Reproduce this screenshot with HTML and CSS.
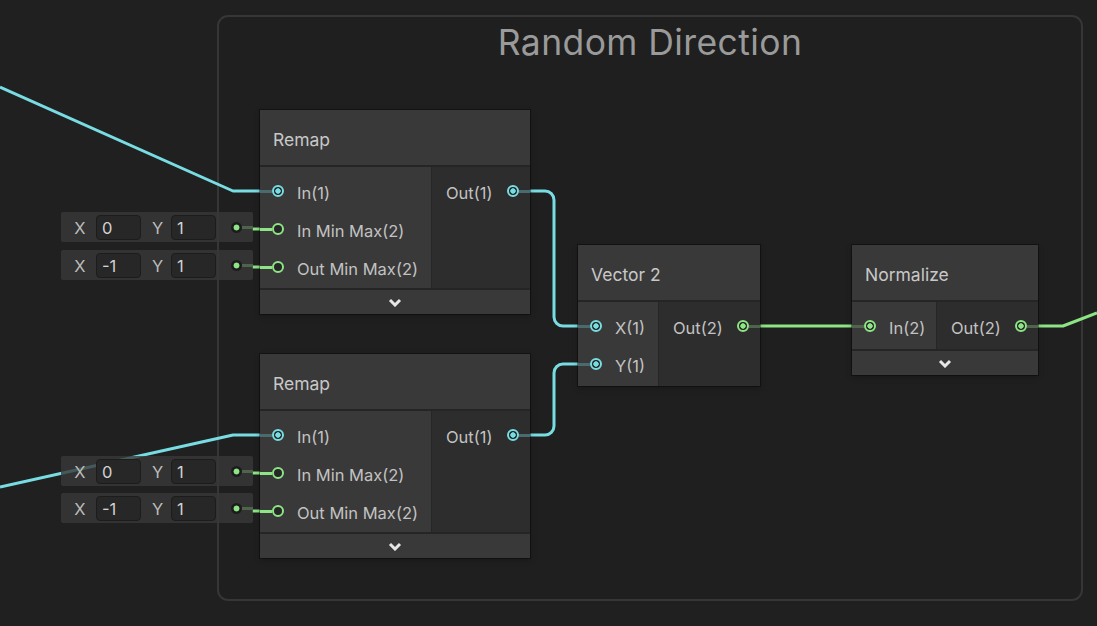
FILE: index.html
```html
<!DOCTYPE html>
<html>
<head>
<meta charset="utf-8">
<link rel="stylesheet" href="styles.css">
</head>
<body>
<div class="canvas">
  <div class="group"><div class="group-title">Random Direction</div></div>

  <svg class="wires" width="1097" height="626" viewBox="0 0 1097 626">
    <g fill="none" stroke-width="3" stroke-linejoin="round">
      <path class="w-cyan" d="M0,87 L233,191 H262"/>
      <path class="w-cyan" d="M0,487 L233,435 H262"/>
      <path class="w-cyan" d="M528,191 H545 A9,9 0 0 1 554,200 V317 A9,9 0 0 0 563,326 H580"/>
      <path class="w-cyan" d="M528,435 H545 A9,9 0 0 0 554,426 V373 A9,9 0 0 1 563,364 H580"/>
      <path class="w-green" d="M758,326 H854"/>
      <path class="w-green" d="M1036,326 H1063 L1097,313"/>
      <path class="w-green" d="M252,229 H262"/>
      <path class="w-green" d="M252,267 H262"/>
      <path class="w-green" d="M252,473 H262"/>
      <path class="w-green" d="M252,511 H262"/>
    </g>
  </svg>

  <!-- property fields -->
  <div class="pfield" style="top:212px">
    <span class="pf-label">X</span><span class="pf-value">0</span>
    <span class="pf-label">Y</span><span class="pf-value">1</span>
    <span class="pf-dot"></span>
  </div>
  <div class="pfield" style="top:250px">
    <span class="pf-label">X</span><span class="pf-value">-1</span>
    <span class="pf-label">Y</span><span class="pf-value">1</span>
    <span class="pf-dot"></span>
  </div>
  <div class="pfield" style="top:456px">
    <span class="pf-label">X</span><span class="pf-value">0</span>
    <span class="pf-label">Y</span><span class="pf-value">1</span>
    <span class="pf-dot"></span>
  </div>
  <div class="pfield" style="top:493px">
    <span class="pf-label">X</span><span class="pf-value">-1</span>
    <span class="pf-label">Y</span><span class="pf-value">1</span>
    <span class="pf-dot"></span>
  </div>

  <!-- Remap 1 -->
  <div class="node remap" style="left:260px; top:110px">
    <div class="node-header">Remap</div>
    <div class="node-body">
      <div class="inputs">
        <div class="in-row"><span class="port cyan on"></span><span class="lbl">In(1)</span></div>
        <div class="in-row"><span class="port green linked"></span><span class="lbl">In Min Max(2)</span></div>
        <div class="in-row"><span class="port green linked"></span><span class="lbl">Out Min Max(2)</span></div>
      </div>
      <div class="outputs">
        <div class="out-row"><span class="lbl">Out(1)</span><span class="port cyan on"></span></div>
      </div>
    </div>
    <div class="node-footer"><svg width="14" height="9" viewBox="0 0 14 9"><polyline points="2,2 7,7 12,2" fill="none" stroke="#e6e6e6" stroke-width="3"/></svg></div>
  </div>

  <!-- Remap 2 -->
  <div class="node remap" style="left:260px; top:354px">
    <div class="node-header">Remap</div>
    <div class="node-body">
      <div class="inputs">
        <div class="in-row"><span class="port cyan on"></span><span class="lbl">In(1)</span></div>
        <div class="in-row"><span class="port green linked"></span><span class="lbl">In Min Max(2)</span></div>
        <div class="in-row"><span class="port green linked"></span><span class="lbl">Out Min Max(2)</span></div>
      </div>
      <div class="outputs">
        <div class="out-row"><span class="lbl">Out(1)</span><span class="port cyan on"></span></div>
      </div>
    </div>
    <div class="node-footer"><svg width="14" height="9" viewBox="0 0 14 9"><polyline points="2,2 7,7 12,2" fill="none" stroke="#e6e6e6" stroke-width="3"/></svg></div>
  </div>

  <!-- Vector 2 -->
  <div class="node vec2" style="left:578px; top:245px">
    <div class="node-header">Vector 2</div>
    <div class="node-body">
      <div class="inputs">
        <div class="in-row"><span class="port cyan on"></span><span class="lbl">X(1)</span></div>
        <div class="in-row"><span class="port cyan on"></span><span class="lbl">Y(1)</span></div>
      </div>
      <div class="outputs">
        <div class="out-row"><span class="lbl">Out(2)</span><span class="port green on"></span></div>
      </div>
    </div>
  </div>

  <!-- Normalize -->
  <div class="node norm" style="left:852px; top:245px">
    <div class="node-header">Normalize</div>
    <div class="node-body">
      <div class="inputs">
        <div class="in-row"><span class="port green on"></span><span class="lbl">In(2)</span></div>
      </div>
      <div class="outputs">
        <div class="out-row"><span class="lbl">Out(2)</span><span class="port green on"></span></div>
      </div>
    </div>
    <div class="node-footer"><svg width="14" height="9" viewBox="0 0 14 9"><polyline points="2,2 7,7 12,2" fill="none" stroke="#e6e6e6" stroke-width="3"/></svg></div>
  </div>
</div>
</body>
</html>
```

FILE: styles.css
```css
html, body {
  margin: 0;
  padding: 0;
  background: #202020;
}

.canvas {
  position: relative;
  width: 1097px;
  height: 626px;
  overflow: hidden;
  background: #202020;
  font-family: Inter, "Noto Sans", sans-serif;
  --cyan: #78dde3;
  --green: #8de585;
  --cyan-dim: #4a6a6d;
  --green-dim: #4f644d;
}

.group {
  position: absolute;
  left: 217px;
  top: 15px;
  width: 866px;
  height: 586px;
  box-sizing: border-box;
  border: 2px solid #363636;
  border-radius: 11px;
  background: #1f1f1f;
}

.group-title {
  margin-top: 6px;
  text-align: center;
  font-size: 35.5px;
  line-height: 40px;
  color: #9a9a9a;
  letter-spacing: 0.4px;
}

.wires {
  position: absolute;
  left: 0;
  top: 0;
}

.w-cyan { stroke: var(--cyan); }
.w-green { stroke: var(--green); }

/* property fields */
.pfield {
  position: absolute;
  left: 61px;
  width: 192px;
  height: 30px;
  box-sizing: border-box;
  background: rgba(56, 56, 56, 0.8);
  border-radius: 2px;
  display: grid;
  grid-template-columns: 35px 45px 30px 45px 1fr;
  align-items: center;
  font-size: 16.5px;
}

.pf-label {
  text-align: center;
  padding-left: 3px;
  padding-top: 2px;
  color: #bcbcbc;
}

.pf-value {
  height: 25px;
  box-sizing: border-box;
  background: #272727;
  border: 1px solid #1c1c1c;
  border-radius: 4px;
  padding-left: 5px;
  padding-top: 1px;
  line-height: 23px;
  color: #d2d2d2;
}

.pf-dot {
  justify-self: end;
  margin-right: 11px;
  width: 11px;
  height: 11px;
  border-radius: 50%;
  position: relative;
  background: radial-gradient(circle, var(--green) 0 2.6px, #1c1c1c 3.3px);
}

.pf-dot::after {
  content: "";
  position: absolute;
  left: 100%;
  top: 4px;
  width: 11px;
  height: 3px;
  background: var(--green-dim);
}

/* nodes */
.node {
  position: absolute;
  background: #2d2d2d;
  box-shadow: 0 0 0 1px rgba(0, 0, 0, 0.35), 0 2px 6px rgba(0, 0, 0, 0.25);
  color: #c4c4c4;
}

.remap { width: 270px; }
.vec2 { width: 182px; }
.norm { width: 186px; }

.node-header {
  height: 57px;
  box-sizing: border-box;
  background: #393939;
  border-bottom: 2px solid #252525;
  display: flex;
  align-items: center;
  padding-left: 13px;
  padding-top: 3px;
  font-size: 17.5px;
  color: #c8c8c8;
}

.node-body {
  display: flex;
}

.inputs {
  background: #393939;
  border-right: 1px solid #262626;
  padding: 5px 0 2px;
}

.remap .inputs { width: 171px; }
.vec2 .inputs { width: 80px; padding-bottom: 3px; }
.norm .inputs { width: 84px; padding-bottom: 4px; }

.outputs {
  flex: 1;
  padding-top: 5px;
}

.in-row, .out-row {
  height: 38px;
  display: flex;
  align-items: center;
  font-size: 16.5px;
  color: #c2c2c2;
}

.lbl {
  padding-top: 4px;
}

.in-row {
  padding-left: 12px;
  gap: 13px;
}

.out-row {
  padding-left: 14px;
  padding-right: 11px;
  justify-content: space-between;
}

.port {
  flex: none;
  position: relative;
  width: 12px;
  height: 12px;
  box-sizing: border-box;
  border-radius: 50%;
  border: 2px solid var(--pc);
  background: #262626;
}

.port.cyan { --pc: var(--cyan); --pd: var(--cyan-dim); }
.port.green { --pc: var(--green); --pd: var(--green-dim); }

.port.on {
  background: radial-gradient(circle, var(--pc) 0 2.4px, #232323 3px);
}

.in-row .port::before {
  content: "";
  position: absolute;
  right: calc(100% + 2px);
  top: 2.5px;
  width: 12px;
  height: 3px;
  background: var(--pd);
}

.in-row .port.linked::before {
  background: var(--pc);
}

.out-row .port::before {
  content: "";
  position: absolute;
  left: calc(100% + 2px);
  top: 2.5px;
  width: 11px;
  height: 3px;
  background: var(--pd);
}

.node-footer {
  height: 26px;
  box-sizing: border-box;
  background: #393939;
  border-top: 2px solid #252525;
  display: flex;
  align-items: center;
  justify-content: center;
  padding-top: 1px;
}

.node-footer svg {
  display: block;
}
```
